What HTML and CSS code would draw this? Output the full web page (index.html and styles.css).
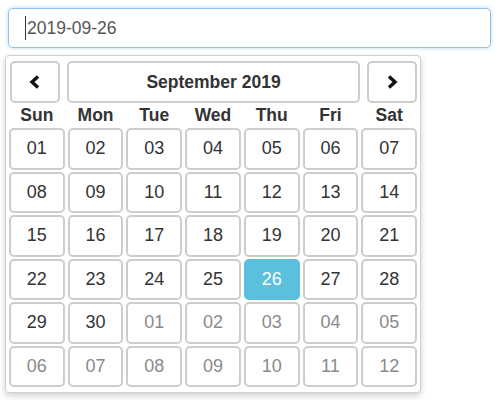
FILE: index.html
```html
<!DOCTYPE html>
<html lang="en">
<head>
    <meta charset="UTF-8">
    <title>Date picker</title>
    <link rel="stylesheet" href="styles.css">
</head>
<body>
    <div class="field">
        <span class="caret"></span>2019-09-26
    </div>
    <div class="picker">
        <div class="head">
            <button class="nav">
                <svg width="12" height="14" viewBox="0 0 12 14"><polyline points="9,1.5 3,7 9,12.5" fill="none" stroke="#111" stroke-width="3.4"/></svg>
            </button>
            <button class="title">September 2019</button>
            <button class="nav">
                <svg width="12" height="14" viewBox="0 0 12 14"><polyline points="3,1.5 9,7 3,12.5" fill="none" stroke="#111" stroke-width="3.4"/></svg>
            </button>
        </div>
        <div class="weekdays">
            <span>Sun</span><span>Mon</span><span>Tue</span><span>Wed</span><span>Thu</span><span>Fri</span><span>Sat</span>
        </div>
        <div class="days">
            <button>01</button><button>02</button><button>03</button><button>04</button><button>05</button><button>06</button><button>07</button>
            <button>08</button><button>09</button><button>10</button><button>11</button><button>12</button><button>13</button><button>14</button>
            <button>15</button><button>16</button><button>17</button><button>18</button><button>19</button><button>20</button><button>21</button>
            <button>22</button><button>23</button><button>24</button><button>25</button><button class="active">26</button><button>27</button><button>28</button>
            <button>29</button><button>30</button><button class="muted">01</button><button class="muted">02</button><button class="muted">03</button><button class="muted">04</button><button class="muted">05</button>
            <button class="muted">06</button><button class="muted">07</button><button class="muted">08</button><button class="muted">09</button><button class="muted">10</button><button class="muted">11</button><button class="muted">12</button>
        </div>
    </div>
</body>
</html>
```

FILE: styles.css
```css
body {
    margin: 0;
    padding: 8px;
    font-family: "Liberation Sans", Arial, sans-serif;
    background: #fff;
    color: #333;
}
.field {
    box-sizing: border-box;
    width: 483px;
    height: 40px;
    border: 1px solid #8fc1ea;
    border-radius: 5px;
    box-shadow: 0 0 4px rgba(102, 175, 233, 0.45);
    padding: 0 0 0 16px;
    font-size: 17.5px;
    color: #555;
    display: flex;
    align-items: center;
}
.caret {
    display: inline-block;
    width: 1px;
    height: 24px;
    background: #333;
    margin-right: 1px;
}
.picker {
    box-sizing: border-box;
    width: 416px;
    margin: 7px 0 0 -3px;
    border: 1px solid #d0d0d0;
    border-radius: 4px;
    box-shadow: 0 3px 6px rgba(0, 0, 0, 0.18);
    padding: 5px 3px 5px 3px;
    background: #fff;
}
button {
    font-family: inherit;
    background: #fff;
    border: 2px solid #cdcdcd;
    border-radius: 5px;
    color: #333;
    padding: 0;
    margin: 0;
}
.head {
    display: flex;
    gap: 7px;
    margin-left: 1px;
    height: 42px;
}
.nav {
    width: 50px;
    display: flex;
    align-items: center;
    justify-content: center;
}
.title {
    flex: 1;
    font-size: 17.5px;
    font-weight: bold;
}
.weekdays {
    display: grid;
    grid-template-columns: repeat(7, 1fr);
    column-gap: 3px;
    width: 408px;
    height: 25px;
    font-size: 17.5px;
    font-weight: bold;
    text-align: center;
    line-height: 24px;
}
.days {
    display: grid;
    grid-template-columns: repeat(7, 1fr);
    grid-auto-rows: 41.5px;
    column-gap: 3px;
    row-gap: 2px;
    width: 408px;
}
.days button {
    font-size: 18px;
}
.days .muted {
    color: #8a8a8a;
}
.days .active {
    background: #5bc0de;
    border-color: #5bc0de;
    color: #fff;
}
```
